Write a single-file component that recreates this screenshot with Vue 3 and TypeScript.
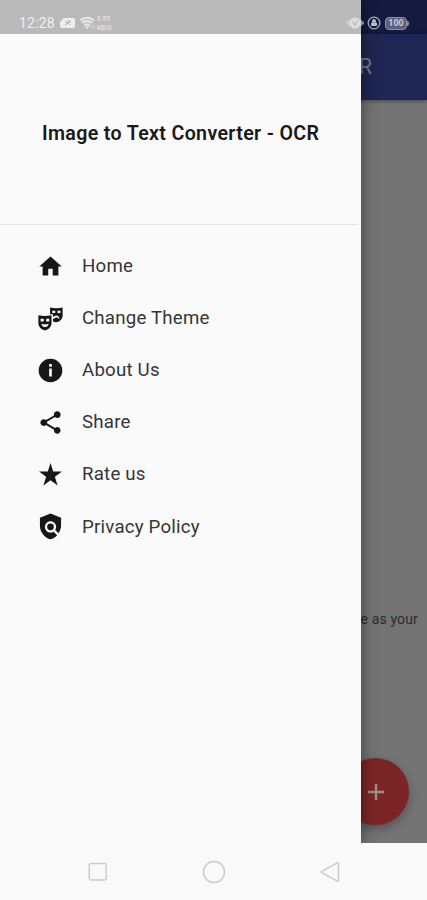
<script setup lang="ts">
interface MenuItem {
  label: string
  slug: string
  path: string
}

const items: MenuItem[] = [
  { label: 'Home', slug: 'home', path: 'M10 20v-6h4v6h5v-8h3L12 3 2 12h3v8z' },
  {
    label: 'Change Theme',
    slug: 'theme',
    path: 'M11.6 2.3Q17 3.3 22.8 2.3V9.3C22.8 12.4 20.2 15 16.9 15.4Q15.5 15.2 14.2 14.5V12.3H15.4Q16 11 17.3 11Q18.5 11 19.2 12.3H20Q19.5 9.6 17.3 9.4Q15.5 9.5 14.2 10.7V8.3H11.6ZM13.6 5V7.2H16.2V5ZM18.2 5V7.2H20.8V5ZM1.2 9.2Q7 10.2 12.9 9.2V16C12.9 19.4 10.2 22 7.1 22.6C4 22 1.2 19.4 1.2 16ZM3.2 12.2V14.6H6V12.2ZM8.1 12.2V14.6H10.9V12.2ZM3.8 16.6Q4.7 19.6 7.1 19.6Q9.5 19.6 10.4 16.6Q7.1 17.8 3.8 16.6Z',
  },
  {
    label: 'About Us',
    slug: 'about',
    path: 'M12 1.5a10.5 10.5 0 1 0 0 21 10.5 10.5 0 0 0 0-21zm1.2 15.8h-2.4v-7h2.4zm0-8.7h-2.4V6.3h2.4z',
  },
  {
    label: 'Share',
    slug: 'share',
    path: 'M18 16.08c-.76 0-1.44.3-1.96.77L8.91 12.7c.05-.23.09-.46.09-.7s-.04-.47-.09-.7l7.05-4.11c.54.5 1.25.81 2.04.81 1.66 0 3-1.34 3-3s-1.34-3-3-3-3 1.34-3 3c0 .24.04.47.09.7L8.04 9.81C7.5 9.31 6.79 9 6 9c-1.66 0-3 1.34-3 3s1.34 3 3 3c.79 0 1.5-.31 2.04-.81l7.12 4.16c-.05.21-.08.43-.08.65 0 1.61 1.31 2.92 2.92 2.92s2.92-1.31 2.92-2.92-1.31-2.92-2.92-2.92z',
  },
  {
    label: 'Rate us',
    slug: 'rate',
    path: 'M12 1.8l2.4 7.6h7.8l-6.3 4.7 2.4 7.6-6.3-4.7-6.3 4.7 2.4-7.6-6.3-4.7h7.8z',
  },
  {
    label: 'Privacy Policy',
    slug: 'policy',
    path: 'M21.4 4.2L12 .4 2.6 4.2V11c0 5.8 4 11 9.4 12.4 2.3-.56 4.33-1.9 5.88-3.71l-3.12-3.12c-1.94 1.29-4.58 1.07-6.29-.64-1.95-1.95-1.95-5.12 0-7.07 1.95-1.95 5.12-1.95 7.07 0 1.71 1.71 1.92 4.35.64 6.29l2.9 2.9C20.5 15.9 21.4 13.38 21.4 11zM12 9.3a3 3 0 1 0 0 6 3 3 0 0 0 0-6z',
  },
]
</script>

<template>
  <div class="phone">
    <main class="page">
      <div class="page-status"></div>
      <header class="app-bar">R</header>
      <section class="content">
        <p class="hint">e as your</p>
        <button class="fab" aria-label="Add">
          <svg width="18" height="18" viewBox="0 0 18 18"><path d="M9 1v16M1 9h16" /></svg>
        </button>
      </section>
    </main>

    <aside class="drawer">
      <div class="drawer-status"></div>
      <div class="drawer-head"><h1>Image to Text Converter - OCR</h1></div>
      <nav class="menu">
        <a v-for="item in items" :key="item.slug" class="item">
          <svg class="icon" viewBox="0 0 24 24"><path :d="item.path" fill-rule="evenodd" /></svg>
          <span>{{ item.label }}</span>
        </a>
      </nav>
    </aside>

    <div class="status">
      <span class="clock">12:28</span>
      <svg class="card" width="15" height="12" viewBox="0 0 15 12">
        <path d="M4 1h9a2 2 0 0 1 2 2v6a2 2 0 0 1-2 2H2a2 2 0 0 1-2-2V5z" fill="#eee" />
        <path d="M5 4l5 4M10 4L5 8M8 4h2v2" fill="none" stroke="#aaa" />
      </svg>
      <svg class="wifi" width="17" height="14" viewBox="0 0 17 14">
        <path d="M1 4.5Q8 -1 15 4.5M3.2 7Q8 3 12.8 7M5.4 9.3Q8 7.2 10.6 9.3" fill="none" stroke="#e9e9e9" stroke-width="2" />
        <path d="M6.5 10.5h3L8 12.5zM12 9v4M15 9v4" fill="#e9e9e9" stroke="#e9e9e9" stroke-width=".8" />
      </svg>
      <span class="speed"><span>0.55</span><span>KB/S</span></span>
      <span class="space"></span>
      <svg class="vibrate" width="18" height="14" viewBox="0 0 18 14">
        <circle cx="9" cy="7" r="5.5" fill="#ddd" />
        <path d="M1 5.5v3M3 4v6M15 4v6M17 5.5v3" stroke="#ddd" stroke-width="1.2" />
        <path d="M6.5 5.5l2.5 4 2.5-5" fill="none" stroke="#b5b5b5" stroke-width="1.1" />
      </svg>
      <svg class="lock" width="14" height="14" viewBox="0 0 14 14">
        <circle cx="7" cy="7" r="5.8" fill="none" stroke="#a9abb9" stroke-width="1.3" />
        <path d="M4.5 7h5v2.5h-5zM5.6 6.5V5a1.4 1.4 0 0 1 2.8 0v1.5" fill="#b9bbc6" stroke="#b9bbc6" />
      </svg>
      <span class="battery">100</span>
      <span class="battery-tip"></span>
    </div>

    <footer class="navbar">
      <svg width="20" height="20" viewBox="0 0 20 20"><rect x="1.2" y="1.5" width="17" height="16.5" rx="2" /></svg>
      <svg width="24" height="24" viewBox="0 0 24 24"><circle cx="12" cy="12" r="10.5" /></svg>
      <svg width="20" height="22" viewBox="0 0 20 22"><path d="M18.5 2.3v17.4q0 1.2-1.2.5L1.8 11.7q-1-.7 0-1.4L17.3 1.8q1.2-.7 1.2.5z" /></svg>
    </footer>
  </div>
</template>

<style>
body {
  margin: 0;
}
</style>

<style scoped>
.phone {
  position: relative;
  display: flex;
  flex-direction: column;
  width: 427px;
  height: 900px;
  overflow: hidden;
  background: #f9f9f9;
  font-family: Roboto, "Liberation Sans", sans-serif;
}
.page {
  display: flex;
  flex-direction: column;
  height: 843px;
  background: #737373;
}
.page-status {
  height: 34px;
  background: #141a40;
}
.app-bar {
  box-sizing: border-box;
  height: 66px;
  padding-right: 55px;
  line-height: 66px;
  text-align: right;
  font-size: 21.5px;
  color: #74778a;
  background: #1e2653;
  box-shadow: 0 1px 4px rgba(0, 0, 0, 0.4);
}
.content {
  display: flex;
  flex: 1;
  flex-direction: column;
  align-items: flex-end;
  justify-content: flex-end;
}
.hint {
  margin: 0 9px 129px 0;
  font-size: 14px;
  line-height: 20px;
  letter-spacing: 0.15px;
  color: #2c2c2c;
}
.fab {
  display: grid;
  place-items: center;
  width: 67px;
  height: 67px;
  margin: 0 18px 18px 0;
  padding: 0;
  border: 0;
  border-radius: 50%;
  background: #7c2526;
  box-shadow: 0 4px 8px rgba(0, 0, 0, 0.28);
}
.fab path {
  stroke: #a58c8c;
  stroke-width: 2.3;
}
.drawer {
  position: absolute;
  top: 0;
  left: 0;
  width: 361px;
  height: 843px;
  background: #fafafa;
  box-shadow: 1px 0 14px rgba(0, 0, 0, 0.42);
  clip-path: inset(0 -40px 0 0);
}
.drawer-status {
  height: 34px;
  background: #bababa;
}
.drawer-head {
  box-sizing: border-box;
  height: 191px;
  padding-top: 88px;
  margin-right: 3px;
  border-bottom: 1px solid #e1e1e1;
}
h1 {
  margin: 0 0 0 42px;
  font-size: 19.6px;
  font-weight: 600;
  line-height: 24px;
  letter-spacing: 0.35px;
  white-space: nowrap;
  color: #191919;
}
.menu {
  display: flex;
  flex-direction: column;
  padding-top: 15px;
}
.item {
  display: flex;
  align-items: center;
  gap: 18px;
  height: 52.1px;
  padding-left: 37px;
  font-size: 18.7px;
  letter-spacing: 0.2px;
  color: #363636;
}
.icon {
  width: 27px;
  height: 27px;
  fill: #171717;
}
.status {
  position: absolute;
  top: 12px;
  left: 0;
  display: flex;
  align-items: center;
  box-sizing: border-box;
  width: 100%;
  height: 22px;
  padding: 0 18px 0 19px;
  color: #f0f0f0;
}
.clock {
  width: 41px;
  font-size: 14px;
  letter-spacing: 0.2px;
}
.wifi {
  margin-left: 4px;
}
.speed {
  display: flex;
  flex-direction: column;
  gap: 1px;
  margin-left: 1px;
  font-size: 6.5px;
  font-weight: 500;
  line-height: 8px;
  color: #e6e6e6;
}
.space {
  flex: 1;
}
.lock {
  margin: 0 4px 0 3px;
}
.battery {
  box-sizing: border-box;
  width: 22px;
  height: 13px;
  border: 1px solid #8b8fa9;
  border-radius: 4px;
  background: #5a5f80;
  font-size: 9px;
  font-weight: 700;
  line-height: 11px;
  text-align: center;
  color: #c9cbd6;
}
.battery-tip {
  width: 2px;
  height: 5px;
  border-radius: 0 2px 2px 0;
  background: #8b8fa9;
}
.navbar {
  display: flex;
  align-items: center;
  justify-content: space-between;
  height: 57px;
  padding: 0 87px 0 88px;
}
.navbar svg {
  fill: none;
  stroke: #cacaca;
  stroke-width: 1.4;
}
</style>
